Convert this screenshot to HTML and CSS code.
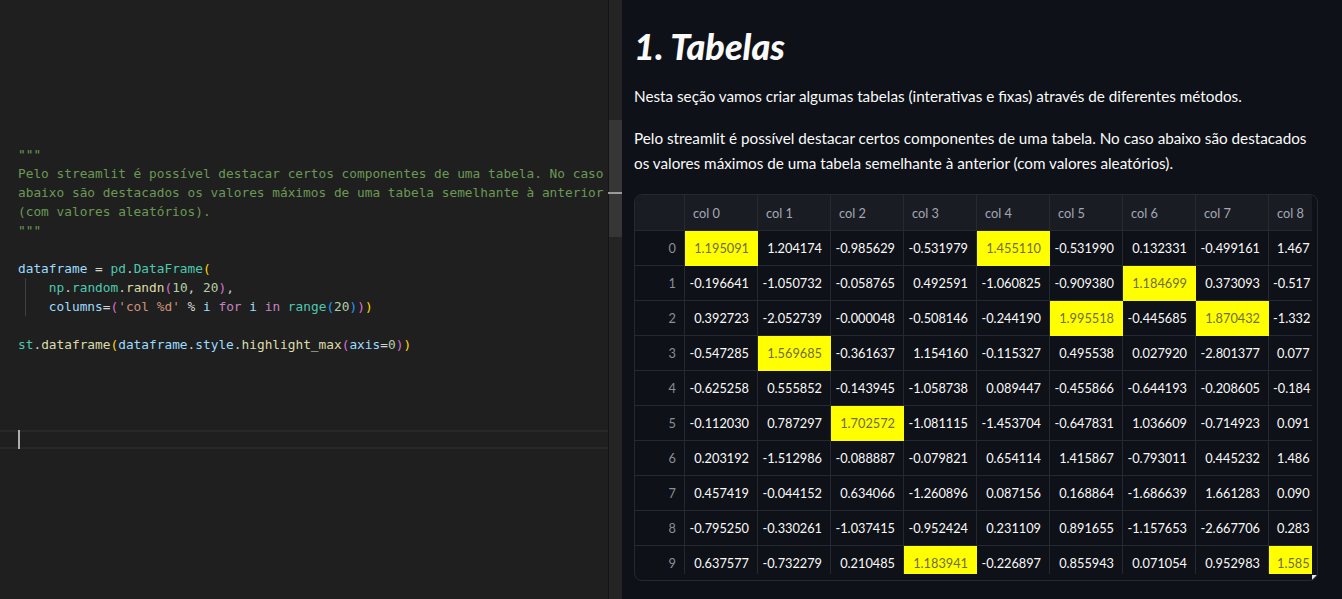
FILE: index.html
```html
<!DOCTYPE html>
<html lang="pt">
<head>
<meta charset="utf-8">
<title>Tabelas</title>
<link rel="stylesheet" href="styles.css">
</head>
<body>
<div class="app">
  <section class="editor">
    <div class="code">
      <div class="line"><span class="cm">"""</span></div>
      <div class="line"><span class="cm">Pelo streamlit é possível destacar certos componentes de uma tabela. No caso</span></div>
      <div class="line"><span class="cm">abaixo são destacados os valores máximos de uma tabela semelhante à anterior</span></div>
      <div class="line"><span class="cm">(com valores aleatórios).</span></div>
      <div class="line"><span class="cm">"""</span></div>
      <div class="line"> </div>
      <div class="line"><span class="var">dataframe</span> <span class="op">=</span> <span class="cls">pd</span>.<span class="cls">DataFrame</span><span class="b1">(</span></div>
      <div class="line indented">    <span class="cls">np</span>.<span class="cls">random</span>.<span class="fn">randn</span><span class="b2">(</span><span class="num">10</span>, <span class="num">20</span><span class="b2">)</span>,</div>
      <div class="line indented">    <span class="var">columns</span><span class="op">=</span><span class="b2">(</span><span class="str">'col %d'</span> <span class="op">%</span> <span class="var">i</span> <span class="kw">for</span> <span class="var">i</span> <span class="kw">in</span> <span class="cls">range</span><span class="b3">(</span><span class="num">20</span><span class="b3">)</span><span class="b2">)</span><span class="b1">)</span></div>
      <div class="line"> </div>
      <div class="line"><span class="cls">st</span>.<span class="fn">dataframe</span><span class="b1">(</span><span class="var">dataframe</span>.<span class="var">style</span>.<span class="fn">highlight_max</span><span class="b2">(</span><span class="var">axis</span><span class="op">=</span><span class="num">0</span><span class="b2">)</span><span class="b1">)</span></div>
      <div class="line"> </div>
      <div class="line"> </div>
      <div class="line"> </div>
      <div class="line"> </div>
      <div class="line current"><span class="cursor"></span></div>
    </div>
  </section>
  <div class="scrollbar">
    <div class="thumb"></div>
    <div class="marker"></div>
  </div>
  <main class="content">
    <h1 class="title">1. Tabelas</h1>
    <p class="text first">Nesta seção vamos criar algumas tabelas (interativas e fixas) através de diferentes métodos.</p>
    <p class="text second">Pelo streamlit é possível destacar certos componentes de uma tabela. No caso abaixo são destacados os valores máximos de uma tabela semelhante à anterior (com valores aleatórios).</p>
    <div class="frame">
      <div class="viewport">
        <div class="grid">
          <div class="hc idx"></div>
          <div class="hc">col 0</div><div class="hc">col 1</div><div class="hc">col 2</div><div class="hc">col 3</div><div class="hc">col 4</div><div class="hc">col 5</div><div class="hc">col 6</div><div class="hc">col 7</div><div class="hc last">col 8</div>

          <div class="ic">0</div>
          <div class="c hi">1.195091</div><div class="c">1.204174</div><div class="c">-0.985629</div><div class="c">-0.531979</div><div class="c hi">1.455110</div><div class="c">-0.531990</div><div class="c">0.132331</div><div class="c">-0.499161</div><div class="c last">1.467</div>

          <div class="ic">1</div>
          <div class="c">-0.196641</div><div class="c">-1.050732</div><div class="c">-0.058765</div><div class="c">0.492591</div><div class="c">-1.060825</div><div class="c">-0.909380</div><div class="c hi">1.184699</div><div class="c">0.373093</div><div class="c last neg">-0.517</div>

          <div class="ic">2</div>
          <div class="c">0.392723</div><div class="c">-2.052739</div><div class="c">-0.000048</div><div class="c">-0.508146</div><div class="c">-0.244190</div><div class="c hi">1.995518</div><div class="c">-0.445685</div><div class="c hi">1.870432</div><div class="c last neg">-1.332</div>

          <div class="ic">3</div>
          <div class="c">-0.547285</div><div class="c hi">1.569685</div><div class="c">-0.361637</div><div class="c">1.154160</div><div class="c">-0.115327</div><div class="c">0.495538</div><div class="c">0.027920</div><div class="c">-2.801377</div><div class="c last">0.077</div>

          <div class="ic">4</div>
          <div class="c">-0.625258</div><div class="c">0.555852</div><div class="c">-0.143945</div><div class="c">-1.058738</div><div class="c">0.089447</div><div class="c">-0.455866</div><div class="c">-0.644193</div><div class="c">-0.208605</div><div class="c last neg">-0.184</div>

          <div class="ic">5</div>
          <div class="c">-0.112030</div><div class="c">0.787297</div><div class="c hi">1.702572</div><div class="c">-1.081115</div><div class="c">-1.453704</div><div class="c">-0.647831</div><div class="c">1.036609</div><div class="c">-0.714923</div><div class="c last">0.091</div>

          <div class="ic">6</div>
          <div class="c">0.203192</div><div class="c">-1.512986</div><div class="c">-0.088887</div><div class="c">-0.079821</div><div class="c">0.654114</div><div class="c">1.415867</div><div class="c">-0.793011</div><div class="c">0.445232</div><div class="c last">1.486</div>

          <div class="ic">7</div>
          <div class="c">0.457419</div><div class="c">-0.044152</div><div class="c">0.634066</div><div class="c">-1.260896</div><div class="c">0.087156</div><div class="c">0.168864</div><div class="c">-1.686639</div><div class="c">1.661283</div><div class="c last">0.090</div>

          <div class="ic">8</div>
          <div class="c">-0.795250</div><div class="c">-0.330261</div><div class="c">-1.037415</div><div class="c">-0.952424</div><div class="c">0.231109</div><div class="c">0.891655</div><div class="c">-1.157653</div><div class="c">-2.667706</div><div class="c last">0.283</div>

          <div class="ic">9</div>
          <div class="c">0.637577</div><div class="c">-0.732279</div><div class="c">0.210485</div><div class="c hi">1.183941</div><div class="c">-0.226897</div><div class="c">0.855943</div><div class="c">0.071054</div><div class="c">0.952983</div><div class="c hi last">1.585</div>
        </div>
      </div>
      <div class="resize"></div>
    </div>
  </main>
</div>
</body>
</html>
```

FILE: styles.css
```css
html, body {
  margin: 0;
  padding: 0;
  background: #0e1117;
}

.app {
  display: flex;
  height: 599px;
  overflow: hidden;
}

/* ---------- editor ---------- */
.editor {
  flex: none;
  width: 608px;
  background: #1f1f1f;
  font-family: "DejaVu Sans Mono", "Liberation Mono", monospace;
  font-size: 12.8px;
  color: #cccccc;
}

.code {
  padding-top: 145px;
}

.line {
  height: 19px;
  line-height: 19px;
  padding-left: 18px;
  white-space: pre;
  box-sizing: border-box;
}

.line.indented {
  background: linear-gradient(#404040, #404040) no-repeat 25px 0 / 1px 100%;
}

.line.current {
  border-top: 2px solid #282828;
  border-bottom: 2px solid #282828;
  line-height: 15px;
}

.cursor {
  display: inline-block;
  width: 2px;
  height: 19px;
  margin-top: -2px;
  vertical-align: top;
  background: #aeafad;
}

.cm { color: #6a9955; }
.var { color: #9cdcfe; }
.op { color: #d4d4d4; }
.cls { color: #4ec9b0; }
.fn { color: #dcdcaa; }
.num { color: #b5cea8; }
.str { color: #ce9178; }
.kw { color: #c586c0; }
.b1 { color: #ffd700; }
.b2 { color: #da70d6; }
.b3 { color: #179fff; }

/* ---------- scrollbar ---------- */
.scrollbar {
  flex: none;
  width: 13px;
  border-left: 1px solid #141414;
  background: #242424;
  position: relative;
  padding-top: 120px;
}

.thumb {
  height: 117px;
  background: #363636;
}

.marker {
  position: absolute;
  left: -1px;
  right: 0;
  top: 192px;
  height: 2px;
  background: #9a9a9a;
}

/* ---------- content ---------- */
.content {
  flex: 1;
  padding-left: 12px;
  color: #fafafa;
  font-family: Lato, "Noto Sans", sans-serif;
}

.title {
  margin: 25px 0 0;
  font-size: 36px;
  line-height: 43px;
  font-style: italic;
  font-weight: 900;
}

.text {
  margin: 0;
  font-size: 15.25px;
  line-height: 25px;
  width: 684px;
}

.text.first {
  margin-top: 15.5px;
}

.text.second {
  margin-top: 17px;
}

/* ---------- dataframe ---------- */
.frame {
  position: relative;
  margin-top: 18.5px;
  width: 684px;
  height: 387px;
  box-sizing: border-box;
  border: 1px solid #262931;
  border-radius: 8px;
  overflow: hidden;
}

.viewport {
  width: 677px;
  height: 379px;
  overflow: hidden;
}

.grid {
  display: grid;
  grid-template-columns: 50px repeat(8, 73px) 43px;
  grid-template-rows: 36px;
  grid-auto-rows: 35px;
  font-size: 12.75px;
}

.hc, .ic, .c {
  box-sizing: border-box;
  border-right: 1px solid #262931;
  border-bottom: 1px solid #262931;
  display: flex;
  align-items: center;
  white-space: nowrap;
}

.hc {
  background: #1a1c24;
  color: #a3a8b4;
  padding-left: 8px;
  font-size: 12.75px;
}

.ic {
  justify-content: flex-end;
  padding-right: 8px;
  color: #8c8f98;
}

.c {
  justify-content: flex-end;
  padding-right: 8px;
  color: #fafafa;
}

.c.last {
  justify-content: flex-start;
  padding-right: 0;
  padding-left: 8px;
  border-right: none;
}

.c.last.neg {
  padding-left: 4px;
}

.hc.last {
  border-right: none;
}

.c.hi {
  background: #ffff00;
  color: #6f6d3c;
  border-color: #ffff00;
}

.resize {
  position: absolute;
  left: 677px;
  top: 380px;
  width: 5px;
  height: 5px;
  background: #e6e6e6;
  clip-path: polygon(0 0, 100% 0, 0 100%);
}
```
